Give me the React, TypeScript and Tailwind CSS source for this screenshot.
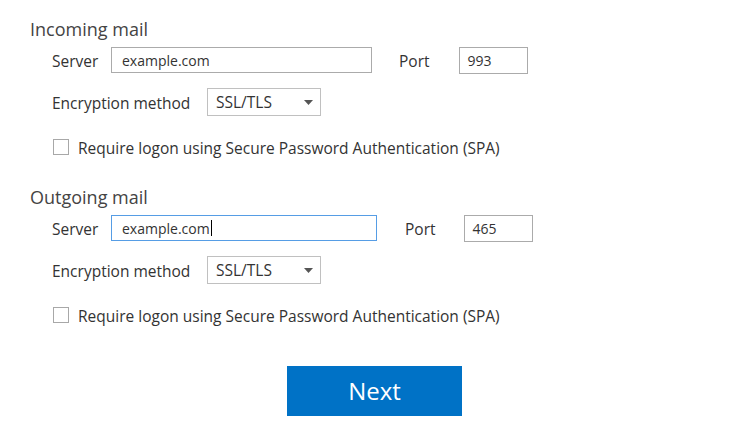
import React from "react";

function Section({
  title,
  port,
  focused,
  titleMt,
  portGap,
  portInputGap,
  serverW,
}: {
  title: string;
  port: string;
  focused?: boolean;
  titleMt: string;
  portGap: string;
  portInputGap: string;
  serverW: string;
}) {
  return (
    <div className={titleMt}>
      <div className="pl-[30px] text-[18px] leading-[24px] text-[#444444]">{title}</div>
      <div className="pl-[52px] mt-[6px] flex items-center h-[26px]">
        <span className="w-[59px] pt-[4px] text-[15.5px] text-[#333333]">Server</span>
        <div
          className={`h-[26px] ${serverW} border ${
            focused ? "border-[#569de5]" : "border-[#ababab]"
          } flex items-center pl-[10px] text-[14px] text-[#333333]`}
        >
          example.com
          {focused && <span className="inline-block w-[1px] h-[16px] bg-black ml-[1px]" />}
        </div>
        <span className={`${portGap} pt-[4px] text-[15.5px] text-[#333333]`}>Port</span>
        <div className={`${portInputGap} h-[27px] w-[69px] border border-[#ababab] flex items-center pl-[8px] text-[14px] text-[#333333]`}>
          {port}
        </div>
      </div>
      <div className="pl-[52px] mt-[15px] flex items-center h-[28px]">
        <span className="w-[155px] pt-[3px] text-[15.5px] text-[#333333]">Encryption method</span>
        <div className="h-[28px] w-[114px] border border-[#c0c0c0] flex items-center justify-between pl-[8px] pr-[7px] text-[15.5px] text-[#333333]">
          <span className="pt-[1px]">SSL/TLS</span>
          <svg width="9" height="5" viewBox="0 0 9 5">
            <path d="M0 0 L9 0 L4.5 5 Z" fill="#555555" />
          </svg>
        </div>
      </div>
      <div className="pl-[53px] mt-[23px] flex items-center h-[16px]">
        <div className="w-[16px] h-[16px] border border-[#a8a8a8] bg-white" />
        <span className="ml-[9px] pt-[3px] text-[15.5px] text-[#333333] whitespace-nowrap">
          Require logon using Secure Password Authentication (SPA)
        </span>
      </div>
    </div>
  );
}

export default function App() {
  return (
    <div
      className="w-[750px] h-[427px] bg-white overflow-hidden"
      style={{ fontFamily: '"Open Sans", "Noto Sans", sans-serif' }}
    >
      <Section
        title="Incoming mail"
        port="993"
        titleMt="pt-[17px]"
        portGap="ml-[27px]"
        portInputGap="ml-[29px]"
        serverW="w-[261px]"
      />
      <Section
        title="Outgoing mail"
        port="465"
        focused
        titleMt="mt-[30px]"
        portGap="ml-[28px]"
        portInputGap="ml-[28px]"
        serverW="w-[266px]"
      />
      <div className="flex justify-center mt-[43px]">
        <button className="ml-[-1px] w-[175px] h-[50px] bg-[#0072c6] text-white text-[24px] flex items-center justify-center">
          Next
        </button>
      </div>
    </div>
  );
}
